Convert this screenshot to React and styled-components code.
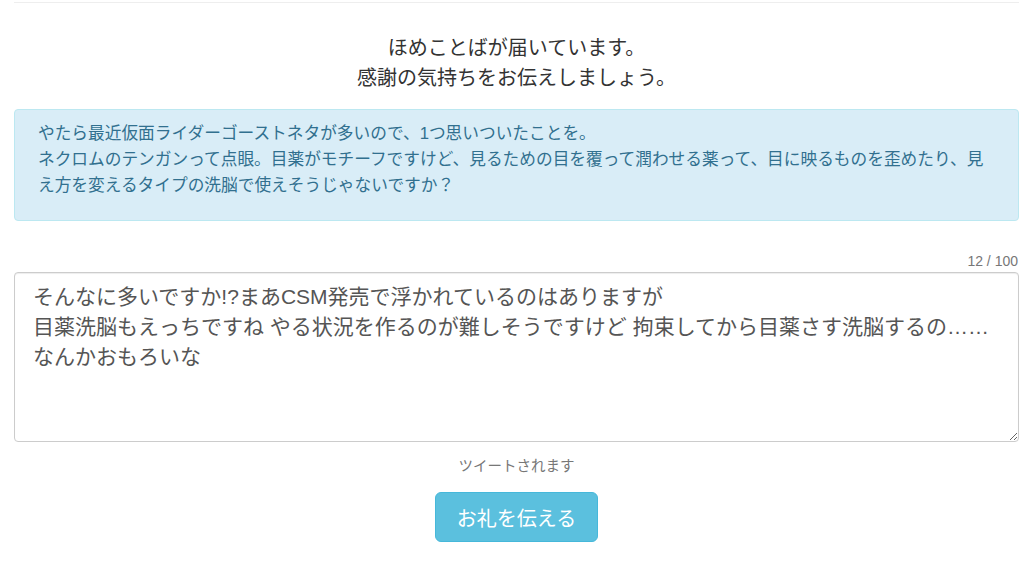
import styled, { createGlobalStyle } from 'styled-components';

const GlobalStyle = createGlobalStyle`
  html, body {
    margin: 0;
    padding: 0;
    background: #fff;
  }
  body {
    font-family: "Liberation Sans", "Noto Sans CJK JP", sans-serif;
    color: #333;
  }
  * {
    box-sizing: border-box;
  }
`;

const Page = styled.div`
  padding: 2px 9px 0 14px;
`;

const Rule = styled.hr`
  margin: 0;
  border: 0;
  border-top: 1px solid #eee;
`;

const Heading = styled.h2`
  margin: 30px 0 0;
  font-size: 20px;
  font-weight: normal;
  line-height: 30px;
  text-align: center;
  color: #333;
`;

const Alert = styled.div`
  margin-top: 16px;
  padding: 11px 23px 21px;
  background: #d9edf7;
  border: 1px solid #bce8f1;
  border-radius: 4px;
  color: #31708f;
  font-size: 16.7px;
  line-height: 26px;
`;

const Counter = styled.div`
  margin-top: 31px;
  text-align: right;
  font-size: 14px;
  line-height: 18px;
  color: #777;
  padding-right: 1px;
`;

const TextArea = styled.textarea`
  display: block;
  width: 100%;
  height: 170px;
  margin-top: 2px;
  padding: 9px 18px;
  font-family: "Liberation Sans", "Noto Sans CJK JP", sans-serif;
  font-size: 21px;
  line-height: 30px;
  color: #555;
  border: 1px solid #ccc;
  border-radius: 4px;
  box-shadow: inset 0 1px 1px rgba(0, 0, 0, 0.075);
  outline: none;
`;

const Note = styled.p`
  margin: 14px 0 0;
  text-align: center;
  font-size: 14.5px;
  line-height: 20px;
  color: #777;
`;

const Actions = styled.div`
  display: flex;
  justify-content: center;
  margin-top: 16px;
`;

const Button = styled.button`
  height: 50px;
  padding: 0 21px;
  font-family: "Liberation Sans", "Noto Sans CJK JP", sans-serif;
  font-size: 20px;
  color: #fff;
  background: #5bc0de;
  border: 1px solid #46b8da;
  border-radius: 6px;
  cursor: pointer;
`;

const reply = `そんなに多いですか!?まあCSM発売で浮かれているのはありますが
目薬洗脳もえっちですね やる状況を作るのが難しそうですけど 拘束してから目薬さす洗脳するの……
なんかおもろいな`;

export default function App() {
  return (
    <Page>
      <GlobalStyle />
      <Rule />
      <Heading>
        ほめことばが届いています。
        <br />
        感謝の気持ちをお伝えしましょう。
      </Heading>
      <Alert>
        やたら最近仮面ライダーゴーストネタが多いので、1つ思いついたことを。
        <br />
        ネクロムのテンガンって点眼。目薬がモチーフですけど、見るための目を覆って潤わせる薬って、目に映るものを歪めたり、見え方を変えるタイプの洗脳で使えそうじゃないですか？
      </Alert>
      <Counter>12 / 100</Counter>
      <TextArea defaultValue={reply} />
      <Note>ツイートされます</Note>
      <Actions>
        <Button>お礼を伝える</Button>
      </Actions>
    </Page>
  );
}
